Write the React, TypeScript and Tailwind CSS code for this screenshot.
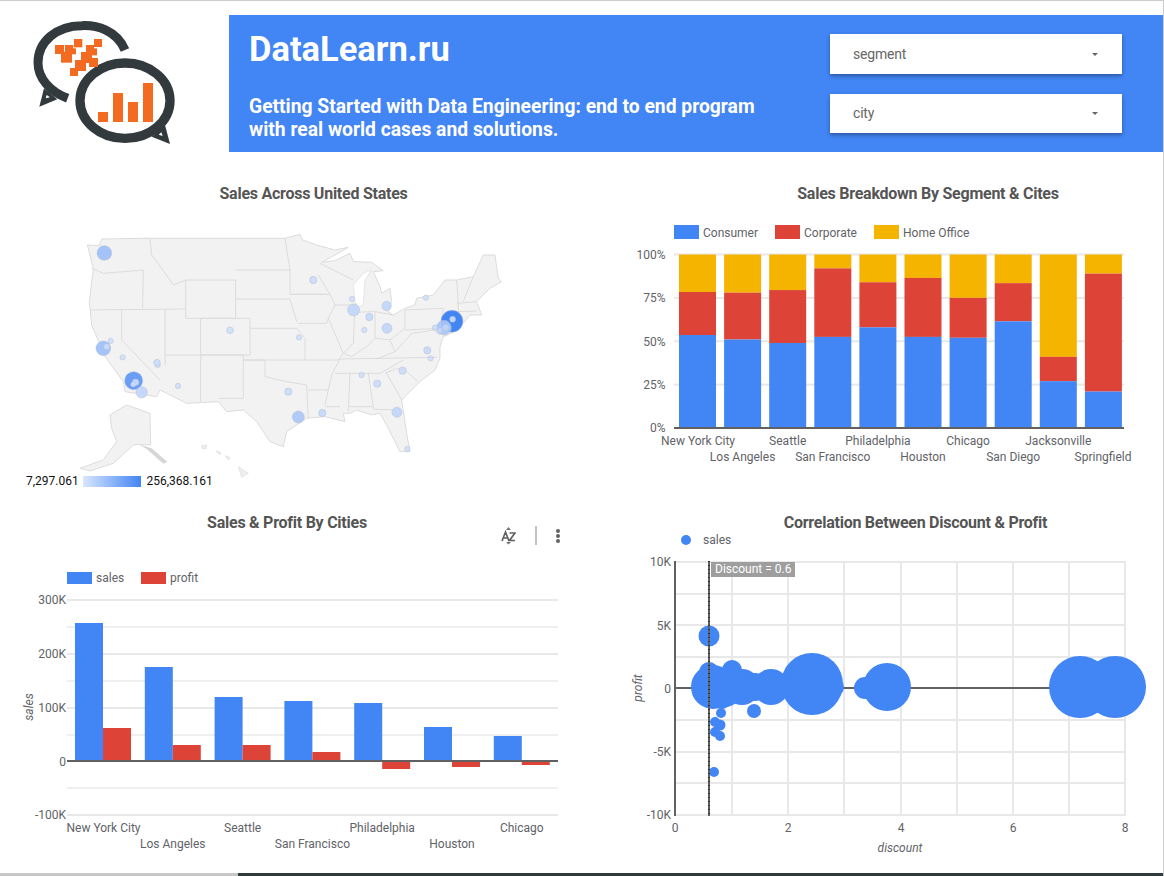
const FONT = 'font-["Roboto",sans-serif]'

const stacked = [
  { city: 'New York City', a: 53.6, b: 78.4 },
  { city: 'Los Angeles', a: 51, b: 78 },
  { city: 'Seattle', a: 49, b: 79.5 },
  { city: 'San Francisco', a: 52.5, b: 92 },
  { city: 'Philadelphia', a: 58, b: 84 },
  { city: 'Houston', a: 52.5, b: 86.5 },
  { city: 'Chicago', a: 52, b: 75 },
  { city: 'San Diego', a: 61.5, b: 83.5 },
  { city: 'Jacksonville', a: 27, b: 41 },
  { city: 'Springfield', a: 21, b: 89 },
]

const cities = [
  { city: 'New York City', sales: 623, profit: 728 },
  { city: 'Los Angeles', sales: 667, profit: 745 },
  { city: 'Seattle', sales: 697, profit: 745 },
  { city: 'San Francisco', sales: 701, profit: 752 },
  { city: 'Philadelphia', sales: 703, profit: 769 },
  { city: 'Houston', sales: 727, profit: 767 },
  { city: 'Chicago', sales: 736, profit: 765 },
]

// x, y, r in map crop coords (3x), value 0..1
const bubbles: [number, number, number, number][] = [
  [103, 84, 22, 0.5], [730, 165, 11, 0.25], [846, 222, 8, 0.22], [851, 255, 18, 0.3], [950, 243, 14, 0.3],
  [898, 276, 11, 0.28], [883, 315, 8, 0.22], [951, 310, 15, 0.3], [1068, 218, 8, 0.22], [1146, 289, 33, 1],
  [1122, 308, 22, 0.45], [1095, 308, 8, 0.25], [1128, 308, 10, 0.3], [1110, 316, 9, 0.3], [1148, 283, 9, 0.25],
  [1072, 376, 11, 0.28], [1082, 400, 8, 0.22], [998, 437, 11, 0.25], [875, 450, 8, 0.22], [922, 476, 11, 0.25],
  [981, 562, 15, 0.3], [1012, 672, 8, 0.22], [757, 564, 11, 0.28], [685, 576, 18, 0.42], [655, 500, 11, 0.25],
  [687, 337, 8, 0.22], [480, 316, 10, 0.22], [122, 348, 8, 0.22], [100, 370, 22, 0.5], [110, 365, 9, 0.25],
  [158, 397, 8, 0.22], [263, 420, 8, 0.2], [261, 413, 10, 0.25], [324, 483, 8, 0.22], [191, 467, 27, 0.85],
  [197, 472, 10, 0.25], [190, 478, 8, 0.25], [215, 502, 17, 0.3],
]

const scatter: [number, number, number][] = [
  [709, 636, 10.5], [812, 684, 31], [887, 687, 24], [865, 688, 11], [1080, 687, 31], [1115, 687, 31],
  [714, 772, 5], [754, 711, 7], [715, 722, 5], [720, 725, 5.5], [715, 732, 5], [720, 736, 5], [721, 713, 5],
  [713, 687, 22], [709, 672, 10], [732, 670, 10], [742, 687, 18], [771, 687, 18], [755, 687, 14],
  [725, 690, 17], [795, 687, 12], [834, 687, 10], [722, 700, 9],
]

const stateLines = [
  'M65 130 L100 145 L220 135', 'M220 40 L240 40 L245 90 L275 130 L310 180 L347 165', 'M220 135 L218 250',
  'M60 255 L347 252', 'M155 255 L155 345 L270 465', 'M285 255 L285 420', 'M347 165 H497 V280 H347 Z',
  'M392 280 V530', 'M392 280 H540 V390 H285', 'M392 390 H520 V520 H445', 'M520 405 H585 V455 L650 470 L710 480 L715 580',
  'M540 310 H680 L705 340 V405', 'M497 222 H660 L680 290', 'M497 135 H660', 'M645 40 L660 135 V208 H770',
  'M660 208 H780 L795 240 L775 280 L770 295 H685', 'M775 280 L820 385 L805 405', 'M805 405 H520', 'M795 240 H855',
  'M855 240 L850 355 L820 385', 'M855 262 L915 260 V340 L890 365 L845 395 L820 385', 'M915 260 L970 270', 'M1005 255 V310 L960 345 L915 340',
  'M960 345 L975 380 L1025 325 L1060 320', 'M975 380 L920 402', 'M810 402 L1100 397', 'M795 445 H930 L1000 405', 'M945 445 L980 430 L1010 440 L1045 470',
  'M950 445 L995 525', 'M810 402 L785 450 L765 540', 'M715 495 H775', 'M765 545 H810', 'M840 445 L835 560',
  'M895 445 L910 545 L910 553 L990 555', 'M835 545 H910', 'M1005 255 L1120 250 L1110 310 L1005 315', 'M1060 320 L1090 315 L1110 330',
  'M750 115 L850 165', 'M745 150 L775 200 L780 208', 'M1160 165 L1165 235', 'M1180 230 L1210 155', 'M1160 235 L1220 230', 'M1160 260 L1220 258', 'M1165 235 V260',
]

const usOutline =
  'M52 60 L88 62 L95 42 L215 40 L645 40 L690 28 L698 45 L740 60 L795 75 L835 67 L795 90 L755 112 L795 107 L840 85 L850 110 L905 112 L940 137 L910 140 L930 185 L935 205 L960 190 L965 230 L955 260 L970 270 L1005 250 L1035 240 L1040 220 L1090 210 L1125 165 L1160 165 L1210 155 L1240 90 L1275 90 L1285 160 L1295 170 L1260 190 L1220 230 L1235 270 L1200 270 L1180 295 L1145 325 L1120 335 L1110 365 L1110 400 L1095 435 L1050 470 L995 525 L1010 625 L1020 680 L990 680 L955 610 L930 565 L905 570 L860 555 L840 565 L820 565 L825 590 L765 575 L710 580 L650 620 L640 665 L600 650 L560 590 L520 555 L470 560 L445 530 L350 535 L270 495 L260 515 L165 500 L160 470 L105 395 L65 300 L58 230 L70 130 Z'

function bubbleColor(v: number) {
  const t = Math.max(0, (v - 0.2) * 1.25)
  const mix = (a: number, b: number) => Math.round(a + (b - a) * t)
  return `rgb(${mix(211, 66)},${mix(226, 133)},${mix(252, 244)})`
}

function ChartText({ x, y, anchor = 'start', children }: { x: number; y: number; anchor?: 'start' | 'middle' | 'end'; children: React.ReactNode }) {
  return (
    <text x={x} y={y} textAnchor={anchor} fontSize={12} fill="#5f6368">
      {children}
    </text>
  )
}

function Logo() {
  const squares = [
    [165, 135, 27], [195, 135, 25], [222, 117, 25], [183, 155, 33], [210, 145, 18], [258, 135, 24], [282, 117, 24],
    [243, 156, 33], [270, 145, 21], [225, 180, 33], [237, 190, 21], [267, 174, 27], [210, 204, 24],
  ]
  return (
    <svg width={229} height={137} viewBox="0 45 687 411" className="shrink-0">
      <path d="M375 150 C350 90 290 75 245 77 C170 77 114 125 114 188 C114 235 150 275 203 295" fill="none" stroke="#323a3d" strokeWidth={27} />
      <path d="M132 265 L118 320 L172 298 Z" fill="#323a3d" />
      <path d="M140 285 L137 295 L150 292 Z" fill="#fff" />
      <ellipse cx={375} cy={302} rx={135} ry={113} fill="#fff" stroke="#323a3d" strokeWidth={28} />
      <path d="M495 375 L510 432 L455 410 Z" fill="#323a3d" />
      <path d="M484 397 L488 408 L476 404 Z" fill="#fff" />
      {squares.map(([x, y, s], i) => (
        <rect key={i} x={x} y={y} width={s} height={s} fill="#f36b21" />
      ))}
      <rect x={294} y={336} width={30} height={30} fill="#f36b21" />
      <rect x={339} y={279} width={30} height={87} fill="#f36b21" />
      <rect x={384} y={306} width={30} height={60} fill="#f36b21" />
      <rect x={429} y={249} width={30} height={117} fill="#f36b21" />
    </svg>
  )
}

function Dropdown({ label, className }: { label: string; className: string }) {
  return (
    <div className={`flex w-[292px] items-center justify-between bg-white pl-[23px] pr-6 text-sm tracking-[-0.2px] text-[#666] shadow-[0_2px_4px_rgba(0,0,0,0.35)] ${className}`}>
      <span>{label}</span>
      <span className="h-0 w-0 border-x-[3px] border-t-[3px] border-x-transparent border-t-[#666]" />
    </div>
  )
}

function Title({ children, className }: { children: React.ReactNode; className: string }) {
  return <h2 className={`h-5 text-center text-base leading-[22px] font-bold tracking-[-0.25px] text-[#555] ${className}`}>{children}</h2>
}

function MapChart() {
  return (
    <svg width={627} height={307} viewBox="0 203 627 307" className="block">
      <defs>
        <linearGradient id="legendGrad">
          <stop offset="0" stopColor="#d9e6fc" />
          <stop offset="1" stopColor="#4285f4" />
        </linearGradient>
      </defs>
      <g transform="translate(70 225) scale(0.3333)">
        <path d={usOutline} fill="#f2f2f2" stroke="#dcdcdc" strokeWidth={3} />
        <path d="M905 135 L885 165 L880 240 L865 245 L855 230 L850 180 L880 145 Z" fill="#fff" stroke="#dcdcdc" strokeWidth={2} />
        {stateLines.map((d, i) => (
          <path key={i} d={d} fill="none" stroke="#dcdcdc" strokeWidth={3} />
        ))}
        <path d="M120 570 L170 540 L240 565 L242 660 L205 658 L190 660 L130 715 L60 738 L30 730 L100 705 L140 650 L125 610 Z" fill="#f2f2f2" stroke="#dcdcdc" strokeWidth={3} />
        <path d="M205 658 L245 670 L292 710 L280 716 L230 672 Z" fill="#d6d6d6" />
        <path d="M395 662 L410 660 L408 672 L396 670 Z M438 678 L452 682 L450 690 Z M465 692 L480 698 L475 705 Z M505 725 L535 745 L515 757 Z" fill="#eee" stroke="#dcdcdc" strokeWidth={2} />
        {bubbles.map(([x, y, r, v], i) => (
          <circle key={i} cx={x} cy={y} r={r} fill={bubbleColor(v)} fillOpacity={v > 0.9 ? 1 : 0.92} stroke="#b4bccb" strokeOpacity={0.7} strokeWidth={2} />
        ))}
      </g>
      <text x={26} y={485} fontSize={12} fill="#111">7,297.061</text>
      <rect x={83} y={476} width={58} height={11} fill="url(#legendGrad)" />
      <text x={146.5} y={485} fontSize={12} fill="#111">256,368.161</text>
    </svg>
  )
}

function StackedChart() {
  const y = (v: number) => 428 - v * 1.735
  return (
    <svg width={537} height={307} viewBox="627 203 537 307" className="block">
      <rect x={674} y={225} width={25} height={14} fill="#4285f4" />
      <ChartText x={703} y={237}>Consumer</ChartText>
      <rect x={775} y={225} width={25} height={14} fill="#dd4437" />
      <ChartText x={804} y={237}>Corporate</ChartText>
      <rect x={874} y={225} width={25} height={14} fill="#f4b400" />
      <ChartText x={903} y={237}>Home Office</ChartText>
      {[100, 75, 50, 25].map(v => (
        <g key={v}>
          <rect x={674} y={y(v) - 1} width={450} height={2} fill="#e8e8e8" />
          <ChartText x={665.5} y={y(v) + 4.5} anchor="end">{v}%</ChartText>
        </g>
      ))}
      <ChartText x={665.5} y={432} anchor="end">0%</ChartText>
      {stacked.map((d, i) => {
        const x = 679 + i * 45.1
        return (
          <g key={d.city}>
            <rect x={x} y={y(100)} width={37} height={y(d.b) - y(100)} fill="#f4b400" />
            <rect x={x} y={y(d.b)} width={37} height={y(d.a) - y(d.b)} fill="#dd4437" />
            <rect x={x} y={y(d.a)} width={37} height={428 - y(d.a)} fill="#4285f4" />
            <ChartText x={i === 0 ? 698 : Math.min(x + 18.5, 1103)} y={i % 2 ? 461 : 445} anchor="middle">{d.city}</ChartText>
          </g>
        )
      })}
      <rect x={674} y={427} width={450} height={2} fill="#616161" />
    </svg>
  )
}

function CityChart() {
  return (
    <svg width={627} height={341} viewBox="0 532 627 341" className="block">
      <rect x={67} y={572} width={25} height={12} fill="#4285f4" />
      <ChartText x={96} y={582}>sales</ChartText>
      <rect x={141} y={572} width={25} height={12} fill="#dd4437" />
      <ChartText x={170} y={582}>profit</ChartText>
      {[600, 627, 654, 681, 708, 735, 788, 815].map(v => (
        <rect key={v} x={67} y={v - 1} width={491} height={2} fill={v === 627 || v === 681 || v === 735 || v === 788 ? '#efefef' : '#e8e8e8'} />
      ))}
      {[['300K', 604], ['200K', 658], ['100K', 712], ['0', 766], ['-100K', 819]].map(([t, v]) => (
        <ChartText key={t} x={66} y={Number(v)} anchor="end">{t}</ChartText>
      ))}
      <text transform="translate(33 707) rotate(-90)" textAnchor="middle" fontSize={12} fontStyle="italic" fill="#5f6368">sales</text>
      {cities.map((d, i) => {
        const x = 75 + i * 69.8
        return (
          <g key={d.city}>
            <rect x={x} y={d.sales} width={28} height={761 - d.sales} fill="#4285f4" />
            <rect x={x + 28} y={Math.min(d.profit, 761)} width={28} height={Math.abs(761 - d.profit)} fill="#dd4437" />
            <ChartText x={i === 0 ? 103.5 : x + 28} y={i % 2 ? 848 : 832} anchor="middle">{d.city}</ChartText>
          </g>
        )
      })}
      <rect x={67} y={760} width={491} height={2} fill="#616161" />
    </svg>
  )
}

function ScatterChart() {
  const hLines = [562, 594, 625, 657, 720, 752, 783, 815]
  const vLines = [732, 788, 844, 901, 957, 1013, 1069, 1125]
  return (
    <svg width={537} height={341} viewBox="627 532 537 341" className="block">
      <circle cx={686} cy={540} r={5} fill="#4285f4" />
      <ChartText x={703} y={544}>sales</ChartText>
      {hLines.map(v => <rect key={v} x={675} y={v - 1} width={451} height={2} fill="#e8e8e8" />)}
      {vLines.map(v => <rect key={v} x={v - 1} y={561} width={2} height={255} fill="#e8e8e8" />)}
      {[['10K', 566], ['5K', 630], ['0', 693], ['-5K', 756], ['-10K', 819]].map(([t, v]) => (
        <ChartText key={t} x={671} y={Number(v)} anchor="end">{t}</ChartText>
      ))}
      {[['0', 675], ['2', 788], ['4', 901], ['6', 1013], ['8', 1125]].map(([t, v]) => (
        <ChartText key={t} x={Number(v)} y={832} anchor="middle">{t}</ChartText>
      ))}
      <text transform="translate(642 688) rotate(-90)" textAnchor="middle" fontSize={12} fontStyle="italic" fill="#5f6368">profit</text>
      <text x={900} y={852} textAnchor="middle" fontSize={12} fontStyle="italic" fill="#5f6368">discount</text>
      <rect x={675} y={687} width={451} height={2} fill="#616161" />
      <rect x={674} y={561} width={2} height={255} fill="#616161" />
      {scatter.map(([x, y, r], i) => <circle key={i} cx={x} cy={y} r={r} fill="#4285f4" />)}
      <rect x={708} y={561} width={2} height={255} fill="#616161" />
      <line x1={709} y1={561} x2={709} y2={816} stroke="#000" strokeDasharray="1 3" />
      <rect x={711} y={562} width={84} height={15} fill="#9e9e9e" />
      <text x={715} y={573} fontSize={12} fill="#fff">Discount = 0.6</text>
    </svg>
  )
}

export default function App() {
  return (
    <div className={`flex h-[876px] w-[1164px] flex-col overflow-hidden border-t border-r border-t-[#ccc] border-r-[#ccc] bg-white ${FONT}`}>
      <header className="mt-[14px] flex h-[137px] shrink-0">
        <Logo />
        <div className="flex flex-1 justify-between bg-[#4285f4] pl-5 pr-[41px] text-white">
          <div>
            <h1 className="mt-[14px] text-[34.5px] leading-10 font-bold">DataLearn.ru</h1>
            <p className="mt-[26px] text-[19.3px] leading-[23px] font-bold">
              Getting Started with Data Engineering: end to end program
              <br />
              with real world cases and solutions.
            </p>
          </div>
          <div className="flex flex-col gap-5 pt-[19px]">
            <Dropdown label="segment" className="h-10" />
            <Dropdown label="city" className="h-[39px] pb-px" />
          </div>
        </div>
      </header>

      <main className="grid flex-1 grid-cols-[627px_537px]">
        <section className="pt-[31px]">
          <Title className="">Sales Across United States</Title>
          <MapChart />
        </section>
        <section className="pt-[31px]">
          <Title className="pl-[65px]">Sales Breakdown By Segment &amp; Cites</Title>
          <StackedChart />
        </section>
        <section className="relative pt-[2px]">
          <Title className="pr-[53px]">Sales &amp; Profit By Cities</Title>
          <div className="absolute top-[16px] left-[501px] flex items-center gap-[19px] text-[#616161]">
            <svg width={15} height={18} viewBox="0 0 15 18">
              <path d="M7.5 0 L10 3 H5 Z M7.5 17.5 L10 15 H5 Z" fill="#757575" />
              <path d="M1 14 L4.5 5 L8 14 M2.3 11 H6.7 M8.5 6 H14 L8.5 13.5 H14" fill="none" stroke="#616161" strokeWidth={1.7} />
            </svg>
            <span className="h-[19px] w-[2px] bg-[#c4c4c4]" />
            <span className="flex w-1 flex-col gap-[1px]">
              <span className="h-1 w-1 rounded-full bg-[#616161]" />
              <span className="h-1 w-1 rounded-full bg-[#616161]" />
              <span className="h-1 w-1 rounded-full bg-[#616161]" />
            </span>
          </div>
          <CityChart />
        </section>
        <section className="pt-[2px]">
          <Title className="pl-[40px]">Correlation Between Discount &amp; Profit</Title>
          <ScatterChart />
        </section>
      </main>

      <footer className="flex h-[3px] shrink-0">
        <div className="h-full w-[238px] bg-[#c8c8c8]" />
        <div className="h-full flex-1 bg-[#2e3a3c]" />
      </footer>
    </div>
  )
}
